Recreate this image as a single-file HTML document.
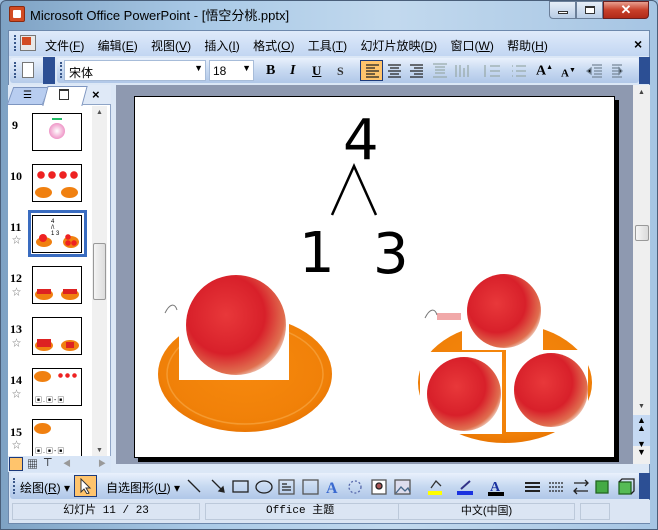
<!DOCTYPE html>
<html><head><meta charset="utf-8"><style>
*{margin:0;padding:0;box-sizing:border-box}
body{width:658px;height:530px;overflow:hidden;background:#9fc0e0;font-family:"Liberation Sans","Noto Sans CJK SC",sans-serif;font-size:12px;position:relative}
.a{position:absolute}
.cn{font-family:"Liberation Sans","Noto Sans CJK SC",sans-serif}
</style></head><body>
<div class="a" style="left:0;top:0;width:658px;height:530px;background:linear-gradient(90deg,#7ea2c4,#a9c9e6 30%,#c2d9ee 60%,#a6c5e3);border:1px solid #4a5f7a;border-radius:6px 6px 0 0"></div>
<div class="a" style="left:9px;top:6px;width:16px;height:16px;background:#d24b22;border:1px solid #8a2a10;border-radius:2px"><div style="margin:3px;width:8px;height:8px;background:#fff;border-radius:1px"></div></div>
<div class="a" style="left:30px;top:5px;font-size:13px;color:#000">Microsoft Office PowerPoint - [悟空分桃.pptx]</div>
<div class="a" style="left:549px;top:1px;width:27px;height:18px;border:1px solid #6b7f99;border-radius:0 0 0 4px;background:linear-gradient(#e6eef8,#b9cde5)"><div style="margin:9px 8px 0;width:10px;height:3px;background:#fff;border:1px solid #333"></div></div>
<div class="a" style="left:576px;top:1px;width:27px;height:18px;border:1px solid #6b7f99;background:linear-gradient(#e6eef8,#b9cde5)"><div style="margin:4px 8px;width:10px;height:8px;border:1px solid #333;border-top-width:2px;background:#fff"></div></div>
<div class="a" style="left:603px;top:1px;width:46px;height:18px;border:1px solid #6b2020;border-radius:0 0 4px 0;background:linear-gradient(#e8a090,#c8402a 50%,#b02a18);color:#fff;font-weight:bold;text-align:center;font-size:13px;line-height:16px">✕</div>
<div class="a" style="left:8px;top:30px;width:642px;height:494px;background:#dbe7f6;border:1px solid #6d88ac"></div>
<div class="a" style="left:9px;top:31px;width:640px;height:25px;background:linear-gradient(#dfeafa,#c2d6f2);"></div>
<div class="a" style="left:14px;top:35px;width:2px;height:16px;border-left:2px dotted #39578a"></div>
<div class="a" style="left:20px;top:35px;width:16px;height:16px;background:#e8e8e8;border:1px solid #777"><div style="width:9px;height:8px;background:#d24b22;margin:1px"></div></div>
<div class="a cn" style="left:45px;top:37px;font-size:12px;white-space:pre">文件(<u>F</u>)    编辑(<u>E</u>)    视图(<u>V</u>)    插入(<u>I</u>)    格式(<u>O</u>)    工具(<u>T</u>)    幻灯片放映(<u>D</u>)    窗口(<u>W</u>)    帮助(<u>H</u>)</div>
<div class="a" style="left:634px;top:36px;font-size:14px;font-weight:bold">×</div>
<div class="a" style="left:10px;top:58px;width:45px;height:25px;border-radius:3px;background:linear-gradient(#e9f1fc,#b5cbea)"></div>
<div class="a" style="left:14px;top:62px;height:16px;border-left:2px dotted #39578a"></div>
<div class="a" style="left:22px;top:62px;width:12px;height:16px;background:#fff;border:1px solid #777"></div>
<div class="a" style="left:43px;top:57px;width:12px;height:27px;background:#2c4f94"></div>
<div class="a" style="left:57px;top:58px;width:582px;height:25px;border-radius:3px;background:linear-gradient(#e9f1fc,#c7d9f1 50%,#b0c7e8)"></div>
<div class="a" style="left:60px;top:62px;height:16px;border-left:2px dotted #39578a"></div>
<div class="a" style="left:64px;top:60px;width:142px;height:21px;background:#fff;border:1px solid #a7bcd9"><span class="cn" style="position:absolute;left:4px;top:3px">宋体</span><span style="position:absolute;right:2px;top:2px;font-size:9px">▼</span></div>
<div class="a" style="left:209px;top:60px;width:45px;height:21px;background:#fff;border:1px solid #a7bcd9"><span style="position:absolute;left:3px;top:3px">18</span><span style="position:absolute;right:2px;top:2px;font-size:9px">▼</span></div>
<div class="a" style="left:266px;top:63px;font-family:'Liberation Serif';font-weight:bold;font-size:14px">B</div>
<div class="a" style="left:290px;top:63px;font-family:'Liberation Serif';font-style:italic;font-weight:bold;font-size:14px">I</div>
<div class="a" style="left:312px;top:63px;font-family:'Liberation Serif';font-weight:bold;font-size:13px;text-decoration:underline">U</div>
<div class="a" style="left:337px;top:64px;font-family:'Liberation Serif';font-weight:bold;font-size:12px;color:#333">S</div>
<div class="a" style="left:360px;top:60px;width:23px;height:21px;background:#ffc46c;border:1px solid #1d3a7a"></div>
<svg class="a" style="left:363px;top:63px" width="260" height="16" stroke="#222" stroke-width="1.3">
<path d="M3 2h13M3 5h9M3 8h13M3 11h9M3 14h13"/>
<path d="M25 2h13M27 5h9M25 8h13M27 11h9M25 14h13"/>
<path d="M47 2h13M51 5h9M47 8h13M51 11h9M47 14h13"/>
<path d="M70 1h14M72 4h10M72 7h10M72 10h10M70 14h14" stroke="#9aa"/>
<path d="M93 2v12M97 2v12M101 5v9M105 2v12" stroke="#9aa"/>
<path d="M127 3h10M127 8h10M127 13h10M122 2v12" stroke="#9aa"/>
<path d="M153 3h10M153 8h10M153 13h10M149 3h1M149 8h1M149 13h1" stroke="#9aa"/>
</svg>
<div class="a" style="left:536px;top:63px;font-family:'Liberation Serif';font-weight:bold;font-size:14px">A<sup style="font-size:7px">▲</sup></div>
<div class="a" style="left:561px;top:66px;font-family:'Liberation Serif';font-weight:bold;font-size:11px">A<sup style="font-size:7px">▼</sup></div>
<svg class="a" style="left:586px;top:63px" width="40" height="16" stroke="#789" stroke-width="1.3"><path d="M6 2h10M8 5h8M8 8h8M8 11h8M6 14h10M1 8l4-3v6z"/><path d="M26 2h10M26 5h8M26 8h8M26 11h8M26 14h10M36 8l-3-3v6z"/></svg>
<div class="a" style="left:639px;top:57px;width:11px;height:27px;background:#2c4f94"></div>
<div class="a" style="left:8px;top:85px;width:103px;height:378px;background:#fff;border-right:1px solid #8ea4c6"></div>
<div class="a" style="left:8px;top:85px;width:103px;height:20px;background:#dfe9f7;border-bottom:1px solid #8ea4c6"></div>
<div class="a" style="left:10px;top:87px;width:36px;height:18px;background:#b8cdf0;transform:skewX(-20deg);border:1px solid #7d95c0"></div>
<div class="a" style="left:45px;top:86px;width:40px;height:20px;background:#fff;border:1px solid #7d95c0;border-bottom:none;transform:skewX(-15deg)"></div>
<div class="a" style="left:23px;top:90px;font-size:10px">☰</div>
<div class="a" style="left:59px;top:89px;width:10px;height:11px;border:1px solid #333;border-top-width:2px"></div>
<div class="a" style="left:92px;top:87px;font-weight:bold;font-size:13px">×</div>
<div class="a" style="left:92px;top:106px;width:15px;height:350px;background:#f0f0f0"></div>
<div class="a" style="left:96px;top:109px;font-size:7px;color:#555">▲</div>
<div class="a" style="left:93px;top:243px;width:13px;height:57px;background:linear-gradient(90deg,#f4f4f4,#dcdcdc);border:1px solid #999;border-radius:2px"></div>
<div class="a" style="left:96px;top:447px;font-size:7px;color:#555">▼</div>
<div class="a" style="left:12px;top:118px;font-family:'Liberation Serif';font-weight:bold;font-size:12px">9</div>
<div class="a" style="left:32px;top:113px;width:50px;height:38px;border:1px solid #000;background:#fff"><div style="margin:4px auto 0;width:10px;height:2px;background:#2b6"></div><div style="margin:3px auto;width:16px;height:16px;border-radius:50%;background:radial-gradient(#fff,#e86ab0)"></div></div>
<div class="a" style="left:10px;top:169px;font-family:'Liberation Serif';font-weight:bold;font-size:12px">10</div>
<div class="a" style="left:32px;top:164px;width:50px;height:38px;border:1px solid #000;background:#fff">
<div class="a" style="left:3px;top:6px;width:42px;height:8px;background:radial-gradient(circle at 5px 4px,#e22 3.5px,transparent 4px),radial-gradient(circle at 16px 4px,#e22 3.5px,transparent 4px),radial-gradient(circle at 27px 4px,#e22 3.5px,transparent 4px),radial-gradient(circle at 38px 4px,#e22 3.5px,transparent 4px)"></div>
<div class="a" style="left:2px;top:22px;width:17px;height:11px;border-radius:50%;background:#f08010"></div><div class="a" style="left:28px;top:22px;width:17px;height:11px;border-radius:50%;background:#f08010"></div></div>
<div class="a" style="left:28px;top:210px;width:59px;height:47px;border:3px solid #3a6cc0"></div>
<div class="a" style="left:10px;top:220px;font-family:'Liberation Serif';font-weight:bold;font-size:12px">11</div>
<div class="a" style="left:32px;top:215px;width:50px;height:38px;border:1px solid #000;background:#fff"><div class="a" style="left:3px;top:21px;width:16px;height:10px;border-radius:50%;background:#f08010"></div><div class="a" style="left:6px;top:18px;width:8px;height:8px;border-radius:50%;background:#e22"></div><div class="a" style="left:30px;top:20px;width:16px;height:12px;border-radius:50%;background:#f08010"></div><div class="a" style="left:32px;top:18px;width:12px;height:12px;background:radial-gradient(circle at 3px 3px,#e22 2.5px,transparent 3px),radial-gradient(circle at 9px 9px,#e22 2.5px,transparent 3px),radial-gradient(circle at 3px 9px,#e22 2.5px,transparent 3px)"></div><div class="a" style="left:18px;top:3px;font-size:6px;line-height:6px">4<br>/\<br>1 3</div></div>
<div class="a" style="left:12px;top:233px;font-size:9px;color:#777">☆</div>
<div class="a" style="left:10px;top:271px;font-family:'Liberation Serif';font-weight:bold;font-size:12px">12</div>
<div class="a" style="left:32px;top:266px;width:50px;height:38px;border:1px solid #000;background:#fff"><div class="a" style="left:2px;top:22px;width:18px;height:11px;border-radius:50%;background:#f08010"></div><div class="a" style="left:28px;top:22px;width:18px;height:11px;border-radius:50%;background:#f08010"></div><div class="a" style="left:4px;top:22px;width:14px;height:5px;background:#d22"></div><div class="a" style="left:30px;top:22px;width:14px;height:5px;background:#d22"></div></div>
<div class="a" style="left:12px;top:285px;font-size:9px;color:#777">☆</div>
<div class="a" style="left:10px;top:322px;font-family:'Liberation Serif';font-weight:bold;font-size:12px">13</div>
<div class="a" style="left:32px;top:317px;width:50px;height:38px;border:1px solid #000;background:#fff"><div class="a" style="left:2px;top:22px;width:18px;height:11px;border-radius:50%;background:#f08010"></div><div class="a" style="left:28px;top:22px;width:18px;height:11px;border-radius:50%;background:#f08010"></div><div class="a" style="left:4px;top:21px;width:14px;height:8px;background:#d22"></div><div class="a" style="left:33px;top:24px;width:8px;height:6px;background:#d22"></div></div>
<div class="a" style="left:12px;top:336px;font-size:9px;color:#777">☆</div>
<div class="a" style="left:10px;top:373px;font-family:'Liberation Serif';font-weight:bold;font-size:12px">14</div>
<div class="a" style="left:32px;top:368px;width:50px;height:38px;border:1px solid #000;background:#fff"><div class="a" style="left:1px;top:2px;width:17px;height:11px;border-radius:50%;background:#f08010"></div><div class="a" style="left:24px;top:4px;width:22px;height:5px;background:radial-gradient(circle,#e22 2px,transparent 2.5px) 0 0/7px 5px"></div><div class="a" style="left:2px;top:26px;font-size:7px;letter-spacing:1px">▣.▣-▣</div></div>
<div class="a" style="left:12px;top:387px;font-size:9px;color:#777">☆</div>
<div class="a" style="left:10px;top:425px;font-family:'Liberation Serif';font-weight:bold;font-size:12px">15</div>
<div class="a" style="left:32px;top:419px;width:50px;height:37px;border:1px solid #000;border-bottom:none;background:#fff"><div class="a" style="left:1px;top:3px;width:17px;height:11px;border-radius:50%;background:#f08010"></div><div class="a" style="left:2px;top:26px;font-size:7px;letter-spacing:1px">▣.▣-▣</div></div>
<div class="a" style="left:12px;top:438px;font-size:9px;color:#777">☆</div>
<div class="a" style="left:8px;top:456px;width:103px;height:16px;background:#d8e5f6"></div>
<div class="a" style="left:9px;top:457px;width:14px;height:14px;background:#ffc46c;border:1px solid #1d3a7a"></div>
<div class="a" style="left:27px;top:456px;font-size:11px">▦</div><div class="a" style="left:43px;top:456px;font-size:11px">⊤</div>
<div class="a" style="left:63px;top:458px;font-size:8px;color:#999">◀</div><div class="a" style="left:98px;top:458px;font-size:8px;color:#999">▶</div>
<div class="a" style="left:116px;top:85px;width:517px;height:379px;background:#8e99b0"></div>
<div class="a" style="left:138px;top:100px;width:481px;height:362px;background:#000"></div>
<div class="a" style="left:134px;top:96px;width:481px;height:362px;background:#fff;border:1px solid #000;overflow:hidden">
<svg width="481" height="362" style="position:absolute;left:-1px;top:-1px" viewBox="134 96 481 362">
<defs>
<radialGradient id="p" cx="0.4" cy="0.4" r="0.65"><stop offset="0" stop-color="#e8383a"/><stop offset="0.6" stop-color="#d8202a"/><stop offset="0.9" stop-color="#e07050"/><stop offset="1" stop-color="#f0d0c0"/></radialGradient>
<radialGradient id="o" cx="0.5" cy="0.45" r="0.6"><stop offset="0" stop-color="#f7890e"/><stop offset="0.8" stop-color="#f08008"/><stop offset="1" stop-color="#e57000"/></radialGradient>
</defs>
<ellipse cx="245" cy="374" rx="87" ry="58" fill="url(#o)"/>
<ellipse cx="245" cy="374" rx="78" ry="50" fill="none" stroke="#f59a30" stroke-width="1.5"/>
<rect x="179" y="272" width="110" height="108" fill="#fff"/>
<circle cx="236" cy="325" r="50" fill="url(#p)"/>
<path d="M165 313c5-10 10-10 12-3" stroke="#777" fill="none"/>
<ellipse cx="505" cy="383" rx="87" ry="60" fill="url(#o)"/>
<rect x="462" y="272" width="81" height="78" fill="#fff"/>
<circle cx="504" cy="311" r="37" fill="url(#p)"/>
<rect x="420" y="352" width="82" height="82" fill="#fff"/>
<circle cx="464" cy="394" r="37" fill="url(#p)"/>
<rect x="506" y="350" width="82" height="82" fill="#fff"/>
<circle cx="551" cy="390" r="37" fill="url(#p)"/>
<path d="M425 318c5-10 10-10 12-3" stroke="#777" fill="none"/>
<rect x="437" y="313" width="24" height="7" fill="#e87070" opacity="0.6"/>
<text x="343" y="159" font-family="DejaVu Sans,Liberation Sans,sans-serif" font-size="56">4</text>
<path d="M332 215L354 166L376 215" stroke="#000" stroke-width="2.5" fill="none"/>
<text x="299" y="272" font-family="DejaVu Sans,Liberation Sans,sans-serif" font-size="56">1</text>
<text x="373" y="273" font-family="DejaVu Sans,Liberation Sans,sans-serif" font-size="56">3</text>
</svg></div>
<div class="a" style="left:633px;top:85px;width:17px;height:379px;background:#efefef"></div>
<div class="a" style="left:638px;top:89px;font-size:7px;color:#444">▲</div>
<div class="a" style="left:635px;top:225px;width:14px;height:16px;background:linear-gradient(90deg,#f6f6f6,#dadada);border:1px solid #999;border-radius:2px"></div>
<div class="a" style="left:638px;top:403px;font-size:7px;color:#444">▼</div>
<div class="a" style="left:633px;top:415px;width:17px;height:31px;background:#c5d9f3"></div>
<div class="a" style="left:637px;top:416px;font-size:9px;line-height:8px">▲<br>▲<br><br>▼<br>▼</div>
<div class="a" style="left:10px;top:473px;width:640px;height:26px;background:linear-gradient(#e9f1fc,#c7d9f1 50%,#b0c7e8);border-radius:3px"></div>
<div class="a" style="left:13px;top:478px;height:16px;border-left:2px dotted #39578a"></div>
<div class="a cn" style="left:20px;top:479px">绘图(<u>R</u>) ▾</div>
<div class="a" style="left:74px;top:475px;width:23px;height:22px;background:#ffc46c;border:1px solid #1d3a7a"></div>
<svg class="a" style="left:80px;top:478px" width="12" height="16"><path d="M1 1v13l3-3 3 5 2-1-3-5h4z" fill="#fff" stroke="#333"/></svg>
<div class="a cn" style="left:106px;top:479px">自选图形(<u>U</u>) ▾</div>
<svg class="a" style="left:185px;top:477px" width="460" height="20" stroke="#222" fill="none" stroke-width="1.3">
<path d="M3 3l12 12"/><path d="M27 3l12 12M39 15l-5-1 4-4z" fill="#222"/>
<rect x="48" y="4" width="15" height="11"/><ellipse cx="79" cy="10" rx="8" ry="6"/>
<rect x="94" y="3" width="15" height="14" stroke="#555"/><path d="M97 7h5M97 10h9M97 13h9"/>
<rect x="118" y="3" width="15" height="14" stroke="#555"/>
<text x="141" y="16" font-family="Liberation Serif" font-weight="bold" font-size="16" fill="#3a6ad0" stroke="none">A</text>
<circle cx="170" cy="10" r="6" stroke="#56a" stroke-dasharray="2 2"/>
<rect x="187" y="3" width="14" height="14" fill="#fff" stroke="#555"/><circle cx="194" cy="9" r="3" fill="#a55"/>
<rect x="210" y="3" width="15" height="14" fill="#dde" stroke="#555"/><path d="M211 16l5-6 4 4 3-3 2 4" stroke="#468"/>
<rect x="243" y="14" width="14" height="4" fill="#ff0" stroke="none"/><path d="M246 11l5-7 5 5" stroke="#333"/>
<rect x="272" y="14" width="16" height="4" fill="#1a32e0" stroke="none"/><path d="M276 12l9-8" stroke="#338" stroke-width="2"/>
<rect x="303" y="15" width="16" height="4" fill="#000" stroke="none"/><text x="305" y="14" font-family="Liberation Serif" font-weight="bold" font-size="14" fill="#1a32a0" stroke="none">A</text>
<path d="M340 6h15M340 10h15M340 14h15" stroke-width="2"/>
<path d="M364 6h15M364 10h15M364 14h15" stroke-dasharray="2 1"/>
<path d="M389 6h14M389 14h14M400 3l3 3-3 3M392 11l-3 3 3 3"/>
<rect x="411" y="4" width="12" height="12" fill="#4a4" stroke="#262"/>
<rect x="434" y="5" width="12" height="12" fill="#5b5" stroke="#262"/><path d="M434 5l3-3h12v12l-3 3"/>
</svg>
<div class="a" style="left:639px;top:473px;width:11px;height:26px;background:#2c4f94"></div>
<div class="a" style="left:9px;top:500px;width:641px;height:23px;background:#dbe5f3"></div>
<div class="a" style="left:12px;top:503px;width:188px;height:17px;border:1px solid #bcc9da;font-family:'Liberation Mono','Noto Sans CJK SC',monospace;font-size:11px;text-align:center;line-height:15px">幻灯片 11 / 23</div>
<div class="a" style="left:205px;top:503px;width:240px;height:17px;border:1px solid #bcc9da;font-family:'Liberation Mono','Noto Sans CJK SC',monospace;font-size:11px;line-height:15px;padding-left:60px">Office 主题</div>
<div class="a" style="left:398px;top:503px;width:177px;height:17px;border:1px solid #bcc9da;font-size:11px;text-align:center;line-height:15px;background:#dbe5f3">中文(中国)</div>
<div class="a" style="left:580px;top:503px;width:30px;height:17px;border:1px solid #bcc9da"></div>
</body></html>
